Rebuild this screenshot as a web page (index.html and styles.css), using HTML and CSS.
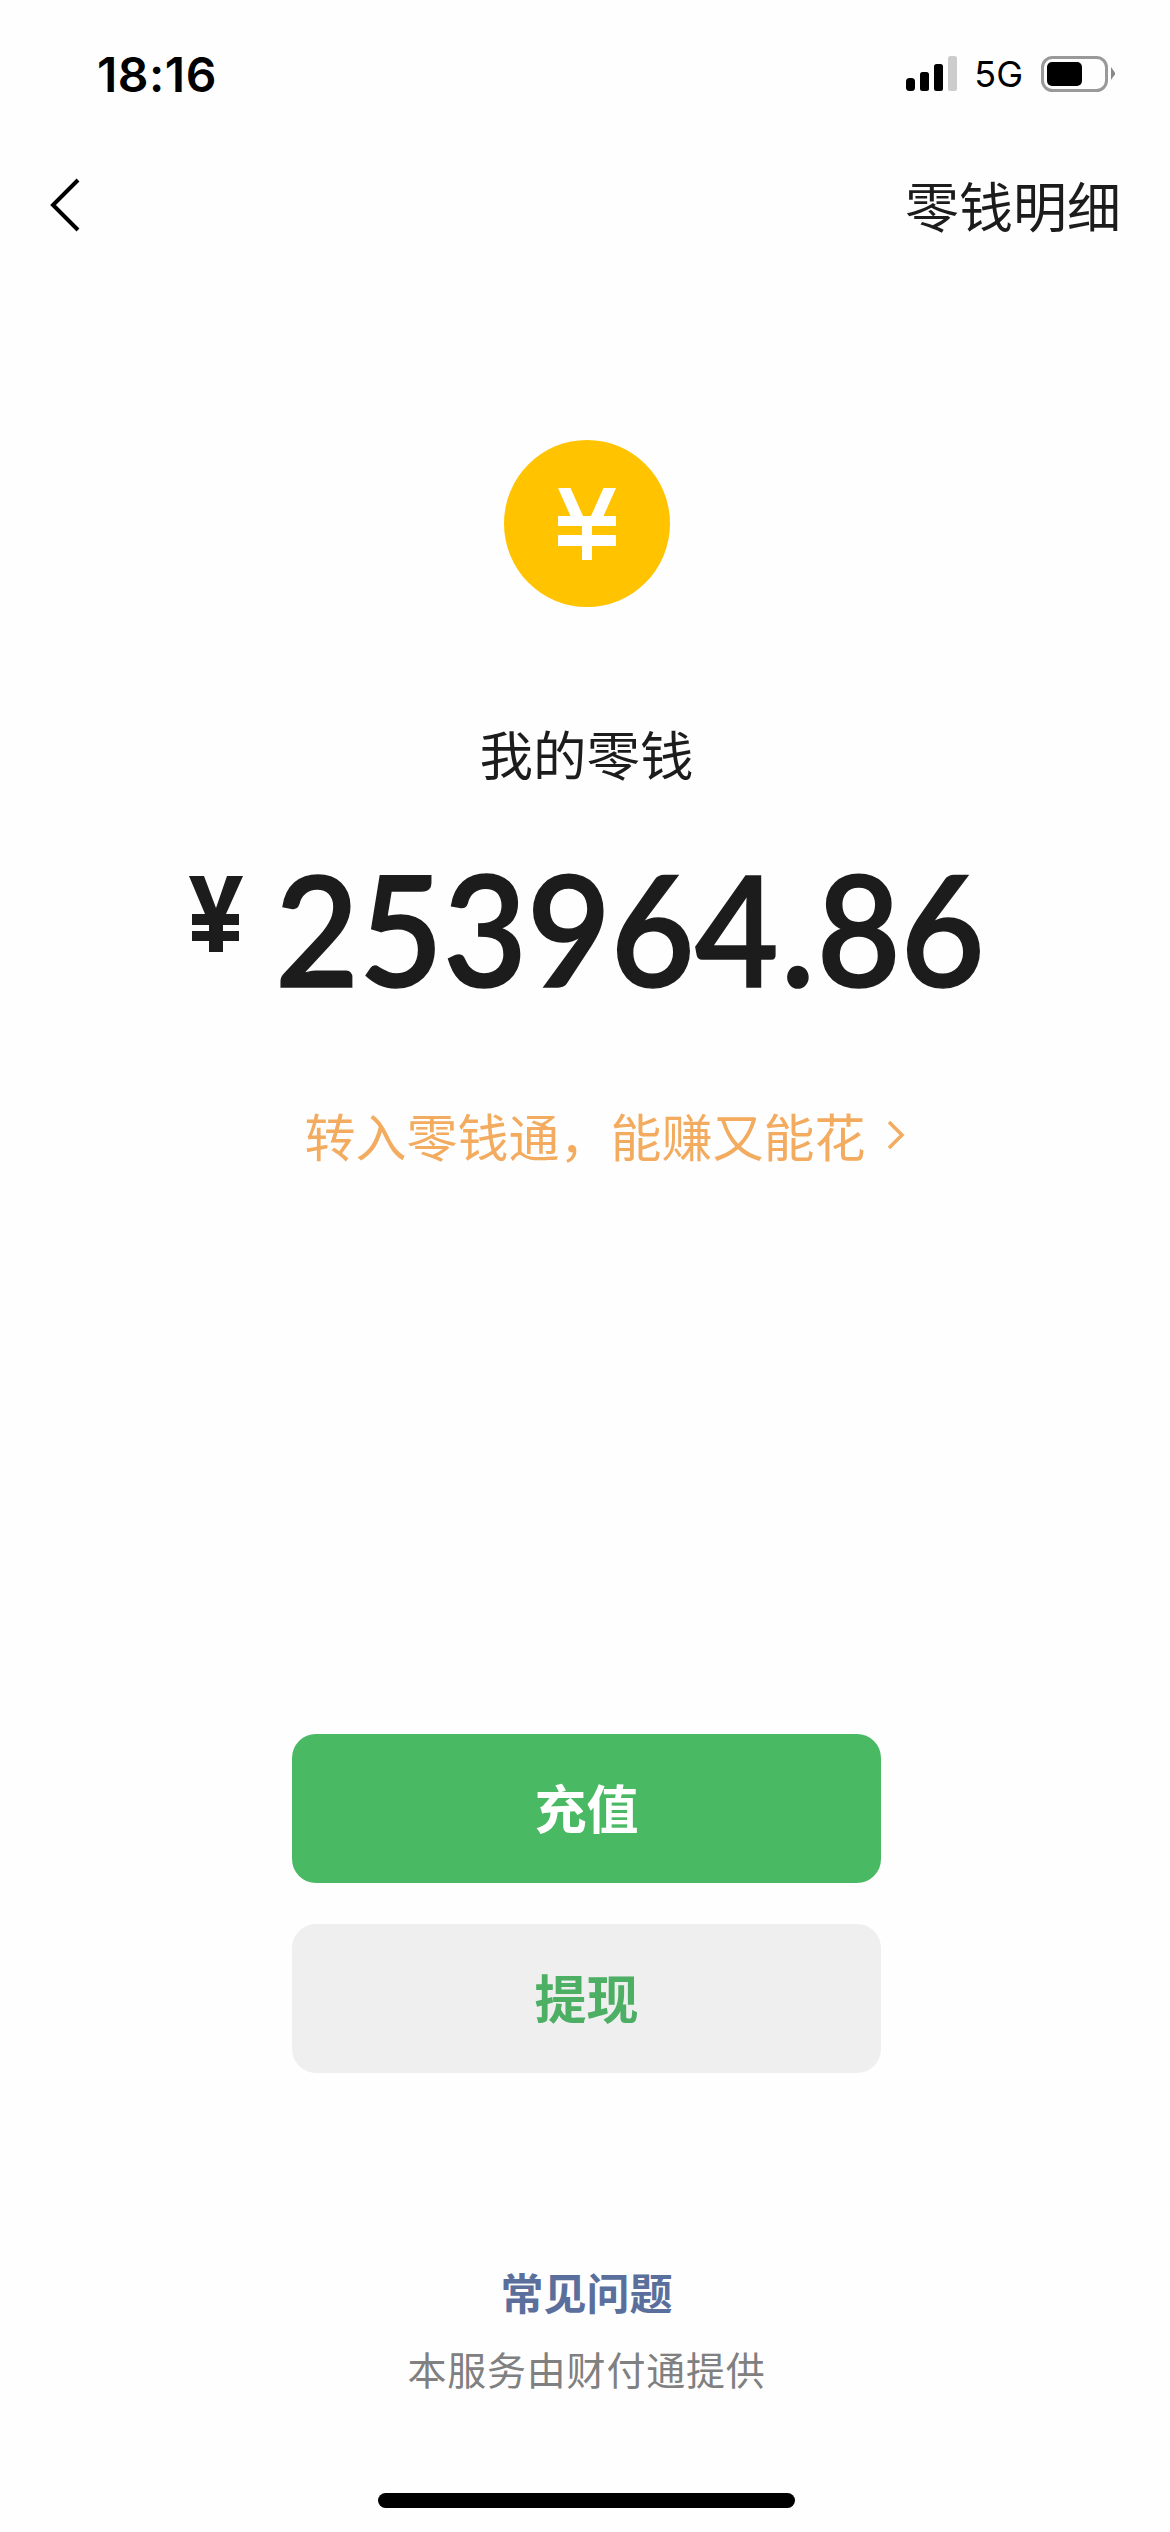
FILE: index.html
```html
<!DOCTYPE html>
<html lang="zh-CN">
<head>
<meta charset="utf-8">
<title>我的零钱</title>
<link rel="stylesheet" href="styles.css">
</head>
<body>
<div class="page">
  <header class="status">
    <span class="time">18:16</span>
    <div class="status-right">
      <svg class="signal" width="51" height="36" viewBox="0 0 51 36"><rect x="0" y="22" width="9" height="13" rx="3.5" fill="#000"/><rect x="14" y="16" width="9" height="19" rx="2.5" fill="#000"/><rect x="28" y="8" width="9" height="27" rx="2.5" fill="#000"/><rect x="42" y="0" width="9" height="35" rx="2.5" fill="#ccc"/></svg>
      <span class="net">5G</span>
      <svg class="battery" width="74" height="36" viewBox="0 0 74 36"><rect x="1.5" y="1.5" width="64" height="33" rx="10" fill="none" stroke="#999" stroke-width="3"/><rect x="6" y="6" width="35" height="24" rx="5" fill="#000"/><path d="M70 11l4.500 6.500-4.500 6.500z" fill="#888"/></svg>
    </div>
  </header>
  <nav class="nav">
    <svg class="back" width="30" height="54" viewBox="0 0 30 54"><path d="M28 2L3 27l25 25" fill="none" stroke="#000" stroke-width="4"/></svg>
    <a class="detail">零钱明细</a>
  </nav>
  <main class="main">
    <div class="coin">
      <svg width="58" height="72" viewBox="0 0 58 72"><path d="M0 0H12.500L25 28H33L45.500 0H58L45.500 28H58V38H34V47H58V58H34V72H24V58H0V47H24V38H0V28H12.500Z" fill="#fff"/></svg>
    </div>
    <div class="label">我的零钱</div>
    <div class="amount">
      <svg class="amount-yen" width="54" height="76" viewBox="0 0 54 76"><path d="M0 0H15L27 32L38 0H54L37 38H50V49H34V55H50V65H34V76H20V65H3V55H20V49H3V38H16Z" fill="#1c1c1c"/></svg>
      <span class="digits">253964<span class="dot">.</span>86</span>
    </div>
    <div class="promo">
      <span>转入零钱通，能赚又能花</span>
      <svg width="18" height="30" viewBox="0 0 18 30"><path d="M2 2l13 13L2 28" fill="none" stroke="#f2ab5f" stroke-width="3.500"/></svg>
    </div>
    <div class="actions">
      <button class="btn btn-primary">充值</button>
      <button class="btn btn-secondary">提现</button>
    </div>
    <a class="faq">常见问题</a>
    <div class="provider">本服务由财付通提供</div>
  </main>
  <div class="home"></div>
</div>
</body>
</html>
```
FILE: styles.css
```css
* { box-sizing: border-box; }
html, body { margin: 0; padding: 0; }
body { background: #fefefe; font-family: "Noto Sans CJK SC", "Noto Sans", sans-serif; }
.page { width: 1170px; height: 2532px; display: flex; flex-direction: column; overflow: hidden; }
.status { height: 148px; display: flex; justify-content: space-between; align-items: center; padding: 0 55px 0 97px; flex: none; }
.time { font-family: Inter, sans-serif; font-weight: 600; font-size: 48px; letter-spacing: 0.5px; color: #000; }
.status-right { display: flex; align-items: center; }
.signal { margin-right: 17px; }
.net { font-family: Inter, sans-serif; font-size: 36px; color: #000; margin-right: 18px; }
.nav { height: 114px; display: flex; justify-content: space-between; align-items: center; padding: 0 49px 0 50px; flex: none; }
.detail { font-size: 54px; line-height: 60px; color: #1c1c1c; }
.main { flex: 1; display: flex; flex-direction: column; align-items: center; padding-left: 3px; }
.coin { width: 166px; height: 167px; border-radius: 50%; background: #ffc300; display: flex; align-items: center; justify-content: center; margin-top: 178px; }
.label { font-size: 53.5px; line-height: 60px; color: #1c1c1c; margin-top: 116px; }
.amount { display: flex; align-items: flex-start; margin-top: 75px; height: 140px; color: #1c1c1c; }
.amount-yen { margin-top: 18px; margin-right: 32px; }
.digits { display: block; font-family: Lato, sans-serif; font-weight: 600; font-size: 154px; line-height: 140px; -webkit-text-stroke: 1.5px #1c1c1c; transform: scaleX(0.94); transform-origin: left center; margin-right: -45px; }
.dot { margin: 0 2px; }
.promo { display: flex; align-items: center; gap: 21px; margin-top: 107px; margin-left: 36px; color: #f2ab5f; font-size: 51px; line-height: 60px; }
.actions { display: flex; flex-direction: column; gap: 41px; margin-top: 569px; }
.btn { width: 589px; height: 149px; border: 0; border-radius: 24px; padding: 0 0 4px; font: 700 52px "Noto Sans CJK SC", sans-serif; }
.btn-primary { background: #4ab964; color: #fff; }
.btn-secondary { background: #efefef; color: #4caf64; }
.faq { font-size: 43px; font-weight: 700; line-height: 50px; color: #5b6f9d; margin-top: 193px; }
.provider { font-size: 39px; line-height: 50px; color: #808080; margin-top: 27px; letter-spacing: 0.8px; }
.home { width: 417px; height: 15px; border-radius: 8px; background: #000; margin: 0 auto 24px; flex: none; position: relative; left: 1px; }
```
